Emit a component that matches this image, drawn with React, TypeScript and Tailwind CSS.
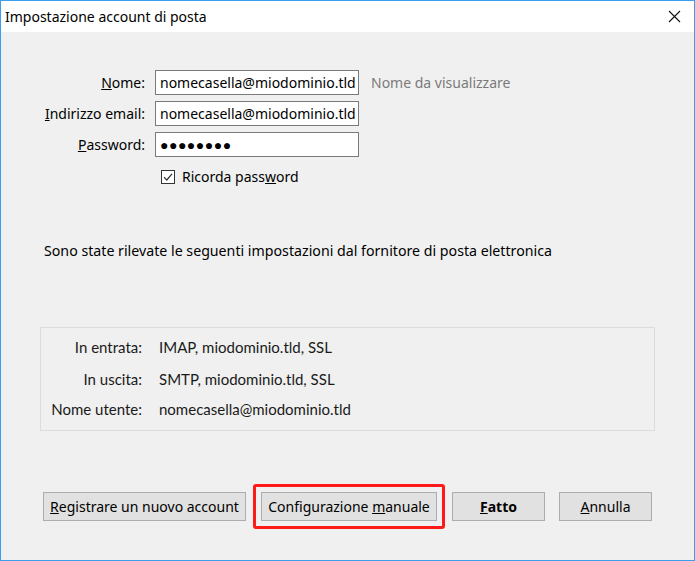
export default function App() {
  const field =
    "h-[25px] w-[204px] overflow-hidden whitespace-nowrap border border-[#7a7a7a] bg-white px-[4px] text-[14px] leading-[23px] text-black";
  const btn =
    "h-[29px] whitespace-nowrap border border-[#adadad] bg-[#e1e1e1] text-[14px] text-black";

  return (
    <div
      className="flex h-[561px] w-[695px] flex-col border border-[#3c9df0] bg-[#f0f0f0]"
      style={{ fontFamily: '"Noto Sans", sans-serif' }}
    >
      {/* title bar */}
      <div className="flex h-[31px] shrink-0 items-center justify-between bg-white pl-[4px] pr-[13px]">
        <span className="text-[14px] text-black">Impostazione account di posta</span>
        <svg width="13" height="13" viewBox="0 0 13 13">
          <path d="M1 1 L12 12 M12 1 L1 12" stroke="#111" strokeWidth="1.1" />
        </svg>
      </div>

      {/* form */}
      <div className="mt-[38px] grid grid-cols-[144px_204px_1fr] items-center gap-x-[10px] gap-y-[6px] text-[14px] text-black">
        <span className="text-right">
          <u>N</u>ome:
        </span>
        <div className={field}>nomecasella@miodominio.tld</div>
        <span className="pl-[2px] text-[#7a7a7a]">Nome da visualizzare</span>

        <span className="text-right">
          <u>I</u>ndirizzo email:
        </span>
        <div className={field}>nomecasella@miodominio.tld</div>
        <span />

        <span className="text-right">
          <u>P</u>assword:
        </span>
        <div className={field + " tracking-[0.5px]"}>●●●●●●●●</div>
        <span />

        <span />
        <div className="mt-[3px] flex items-center gap-[7px] pl-[6px]">
          <svg width="14" height="14" viewBox="0 0 14 14">
            <rect x="0.5" y="0.5" width="13" height="13" fill="#fff" stroke="#333" />
            <path d="M3 7.2 L5.8 10 L11 3.8" fill="none" stroke="#333" strokeWidth="1.2" />
          </svg>
          <span className="whitespace-nowrap">
            Ricorda pass<u>w</u>ord
          </span>
        </div>
        <span />
      </div>

      <p className="mt-[53px] pl-[43px] text-[14.2px] text-black">
        Sono state rilevate le seguenti impostazioni dal fornitore di posta elettronica
      </p>

      {/* detected settings */}
      <div
        className="mx-[39px] mt-[66px] grid h-[104px] grid-cols-[101px_auto] content-start gap-x-[17px] border border-[#dcdcdc] pt-[9px] text-[15px] text-[#1a1a1a]"
        style={{ fontFamily: "Lato, sans-serif" }}
      >
        <span className="text-right leading-[20px]">In entrata:</span>
        <span className="leading-[20px]">IMAP, miodominio.tld, SSL</span>
        <span className="mt-[12px] text-right leading-[20px]">In uscita:</span>
        <span className="mt-[12px] leading-[20px]">SMTP, miodominio.tld, SSL</span>
        <span className="mt-[10px] text-right leading-[20px]">Nome utente:</span>
        <span className="mt-[10px] leading-[20px]">nomecasella@miodominio.tld</span>
      </div>

      {/* buttons */}
      <div className="mt-[53px] flex items-center pl-[42px]">
        <button className={btn + " w-[203px]"}>
          <u>R</u>egistrare un nuovo account
        </button>
        <div className="ml-[7px] rounded-[3px] border-[3px] border-[#ff1a1a] p-[5px]">
          <button className={btn + " block w-[176px]"}>
            Configurazione <u>m</u>anuale
          </button>
        </div>
        <button className={btn + " ml-[7px] w-[93px] font-bold"}>
          <u>F</u>atto
        </button>
        <button className={btn + " ml-[14px] w-[93px]"}>
          <u>A</u>nnulla
        </button>
      </div>
    </div>
  );
}
